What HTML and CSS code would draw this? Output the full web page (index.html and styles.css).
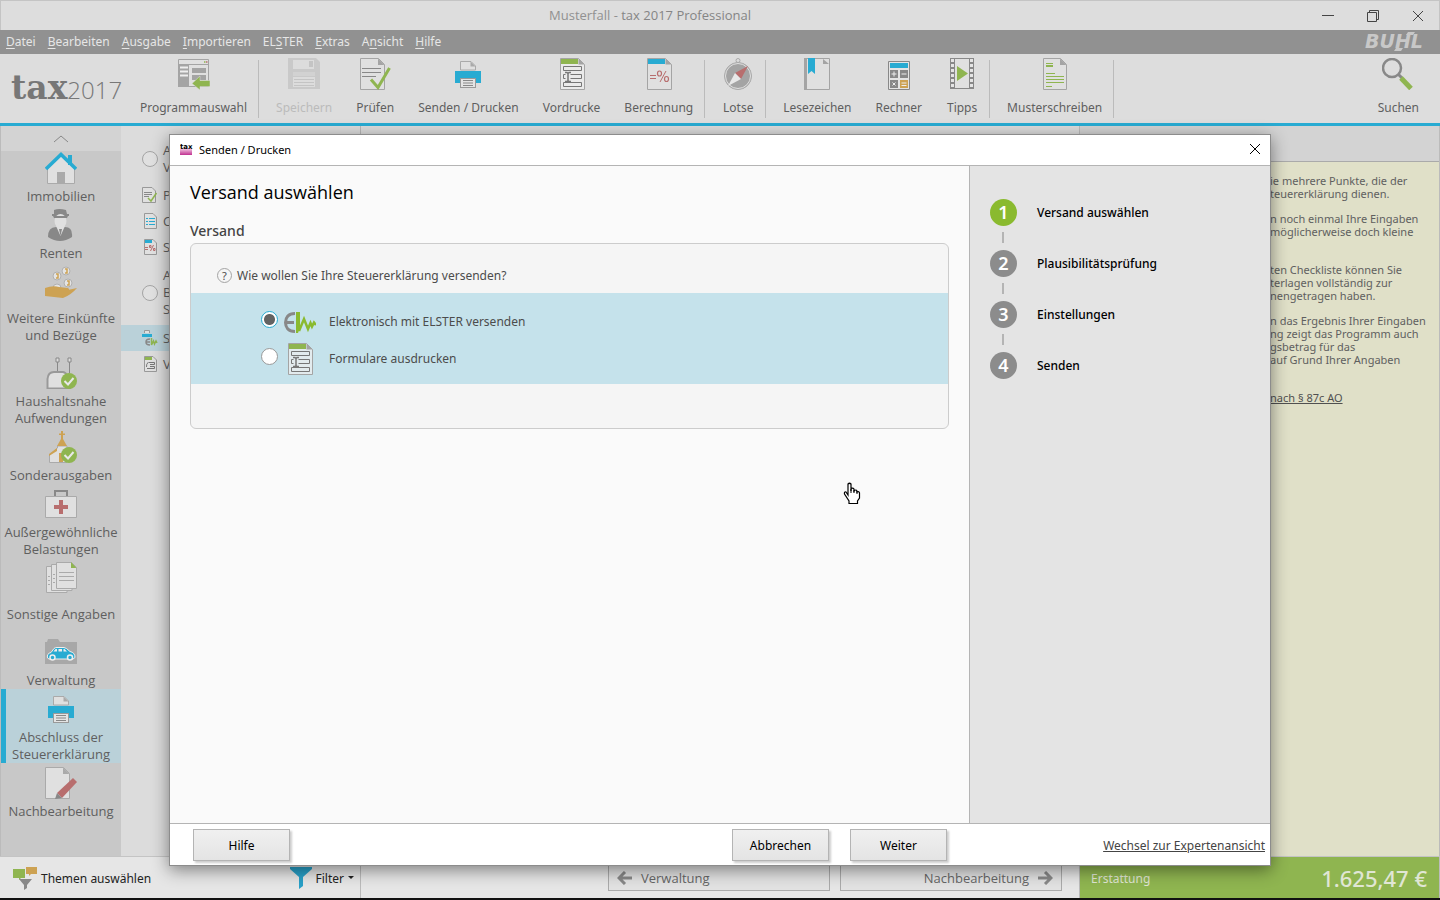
FILE: index.html
```html
<!DOCTYPE html>
<html lang="de">
<head>
    <meta charset="UTF-8">
    <meta name="viewport" content="width=device-width, initial-scale=1.0">
    <title>Musterfall - tax 2017 Professional</title>
    <link rel="stylesheet" href="styles.css">
</head>
<body>
<svg class="sprite" aria-hidden="true">
    <symbol id="i-printer" viewBox="0 0 32 32">
        <path d="M8.500 12V3.500H19L23.500 8V12Z" fill="#e0e0e0" stroke="#aaa"/>
        <path d="M18.500 3.500V8.500H23.500Z" fill="#aaa"/>
        <rect x="3" y="13" width="26" height="12" fill="#28abd2"/>
        <rect x="8.500" y="20.500" width="15" height="9" fill="#e4e4e4" stroke="#999"/>
        <path d="M11 22.500H21M11 25H21M11 27.500H21" stroke="#888"/>
    </symbol>
    <symbol id="i-form" viewBox="0 0 32 32">
        <path d="M4.500 .500H22.500L28.500 6.500V31.500H4.500Z" fill="#f0f0f0" fill-opacity=".7" stroke="#a4a4a4"/>
        <rect x="5" y="1" width="17" height="5" class="green"/>
        <path d="M22.500 .500V6.500H28.500Z" fill="#a4a4a4"/>
        <g fill="none" stroke="#777">
            <path d="M7.500 8.500H25.500V12.500H7.500ZM14.500 16.500H25.500V20.500H14.500M9.500 16.500H7.500V20.500H9.500M7.500 24.500H25.500V28.500H7.500Z"/>
            <path d="M12 15V23M9 14.500H11L12 15.500L13 14.500H15M9 23.500H11L12 22.500L13 23.500H15" stroke-width="1.500"/>
        </g>
    </symbol>
    <symbol id="i-calc-sheet" viewBox="0 0 32 32">
        <path d="M4.500 .500H22.500L28.500 6.500V31.500H4.500Z" fill="#e0e0e0" stroke="#a4a4a4"/>
        <rect x="5" y="1" width="17" height="5" fill="#28abd2"/>
        <path d="M22.500 .500V6.500H28.500Z" fill="#a4a4a4"/>
        <path d="M7 17.500H13M7 20.500H13M23 13L17 24" stroke="#b86e6e" fill="none"/>
        <g fill="none" stroke="#b86e6e" stroke-width="1.200"><ellipse cx="16.500" cy="15.500" rx="2" ry="2.500"/><ellipse cx="23.500" cy="21" rx="2" ry="2.500"/></g>
    </symbol>
    <symbol id="i-check-sheet" viewBox="0 0 32 32">
        <path d="M1.500 .500H19.500L25.500 6.500V31.500H1.500Z" fill="#e0e0e0" stroke="#a4a4a4"/>
        <path d="M19 .500V7H25.500Z" fill="#a4a4a4"/>
        <path d="M3 10.500H22M3 14.500H22M3 18.500H17" stroke="#888"/>
        <path d="M12 21.500L19 29.500L30.500 10" fill="none" stroke="#8fb550" stroke-width="3"/>
    </symbol>
    <symbol id="i-done" viewBox="0 0 16 16">
        <circle cx="8" cy="8" r="8" fill="#8fb550"/>
        <path d="M3.500 8L7 11.500L12.500 5" fill="none" stroke="#e8e8e8" stroke-width="2"/>
    </symbol>
</svg>

<div class="app">
    <header class="titlebar">
        <div class="title">Musterfall - <span>tax 2017 Professional</span></div>
        <div class="winbuttons">
            <button aria-label="Minimieren"><svg width="12" height="12"><path d="M0 5.500H12" stroke="#444"/></svg></button>
            <button aria-label="Wiederherstellen"><svg width="12" height="12"><path d="M.500 2.500H9.500V11.500H.500ZM2.500 2.500V.500H11.500V9.500H9.500" fill="none" stroke="#444"/></svg></button>
            <button aria-label="Schließen"><svg width="12" height="12"><path d="M1 1L11 11M11 1L1 11" stroke="#444"/></svg></button>
        </div>
    </header>

    <nav class="menubar">
        <a href="#"><u>D</u>atei</a>
        <a href="#"><u>B</u>earbeiten</a>
        <a href="#"><u>A</u>usgabe</a>
        <a href="#"><u>I</u>mportieren</a>
        <a href="#">EL<u>S</u>TER</a>
        <a href="#"><u>E</u>xtras</a>
        <a href="#">A<u>n</u>sicht</a>
        <a href="#"><u>H</u>ilfe</a>
        <svg class="buhl" width="74" height="23" viewBox="0 0 74 23">
            <text x="1" y="18">BUHL</text>
            <path d="M44 2H51L49 5H42ZM32 18H39L37 21H30Z" fill="#c8c8c8"/>
        </svg>
    </nav>

    <div class="toolbar">
        <div class="logo"><b>tax</b><span>2017</span></div>
        <div class="group">
            <button class="tool">
                <svg viewBox="0 0 32 32"><path d="M.500 1.500H30.500V28.500H.500Z" fill="#e0e0e0" stroke="#a4a4a4"/><path d="M0 6H11V29H0ZM11 6H31V7H11ZM14 10H28V15H14ZM14 17H28V22H14ZM30 7H31V24H30Z" fill="#a4a4a4"/><path d="M2 9.500H10M2 13.500H10M2 17.500H10" stroke="#eee" stroke-width="2"/><path d="M26 4H27.500" stroke="#8fb550" stroke-width="1.500"/><path d="M28 4H29.500" stroke="#b86e6e" stroke-width="1.500"/><path d="M14 25.500L22 18V22.500H32V28.500H22V32Z" fill="#8fb550" stroke="#ddd" stroke-width=".5"/></svg>
                Programmauswahl
            </button>
        </div>
        <div class="group">
            <button class="tool" disabled>
                <svg viewBox="0 0 32 32"><path d="M0 0H28L32 4V31H0Z" fill="#c9c9c9"/><path d="M5 2H26V11H5ZM5 19H27V29H5Z" fill="#dcdcdc"/><path d="M21 3H25V9H21ZM6 21H26V22H6ZM6 24H26V25H6ZM6 27H26V28H6Z" fill="#c4c4c4"/><path d="M5 14H27V18H5Z" fill="#d2d2d2"/></svg>
                Speichern
            </button>
            <button class="tool"><svg><use href="#i-check-sheet"/></svg>Prüfen</button>
            <button class="tool"><svg><use href="#i-printer"/></svg>Senden / Drucken</button>
            <button class="tool"><svg><use href="#i-form"/></svg>Vordrucke</button>
            <button class="tool"><svg><use href="#i-calc-sheet"/></svg>Berechnung</button>
        </div>
        <div class="group">
            <button class="tool">
                <svg viewBox="0 0 32 32"><circle cx="16" cy="2.500" r="2" fill="none" stroke="#aaa"/><circle cx="16" cy="18" r="13.500" fill="#a4a4a4" stroke="#aaa"/><circle cx="16" cy="18" r="12.500" fill="#a4a4a4" stroke="#e0e0e0"/><path d="M26 8L19 21L13 15Z" fill="#b86e6e"/><path d="M6 28L13 15L19 21Z" fill="#e8e8e8"/></svg>
                Lotse
            </button>
        </div>
        <div class="group">
            <button class="tool">
                <svg viewBox="0 0 32 32"><path d="M3.500 .500H28.500V31.500H3.500Z" fill="#e0e0e0" stroke="#a4a4a4"/><path d="M3 0H6V32H3Z" fill="#a4a4a4"/><path d="M22 1V6H28Z" fill="#a4a4a4"/><path d="M7 0H14V16L10.500 13L7 16Z" fill="#28abd2"/></svg>
                Lesezeichen
            </button>
            <button class="tool">
                <svg viewBox="0 0 32 32"><path d="M5.500 3.500H26.500V31.500H5.500Z" fill="#e4e4e4" stroke="#888"/><path d="M7 5H25V10H7Z" fill="#28abd2"/><path d="M7 12H15V20H7ZM17 12H25V20H17ZM7 22H15V30H7Z" fill="#888"/><path d="M17 22H25V30H17Z" fill="#cda253"/><path d="M8.500 16H13.500M11 13.500V18.500M18.500 16H23.500M9.500 24.500L12.500 27.500M12.500 24.500L9.500 27.500M18.500 25H23.500M18.500 27.500H23.500" stroke="#eee"/></svg>
                Rechner
            </button>
            <button class="tool">
                <svg viewBox="0 0 32 32"><path d="M4 0H28V31H4Z" fill="#888"/><path d="M9 1H23V30H9Z" fill="#e0e0e0"/><path d="M6.500 1V31M25.500 1V31" stroke="#e4e4e4" stroke-width="3" stroke-dasharray="3 2"/><path d="M11 8L22 15.500L11 23Z" fill="#8fb550"/></svg>
                Tipps
            </button>
        </div>
        <div class="group">
            <button class="tool">
                <svg viewBox="0 0 32 32"><path d="M4.500 .500H21.500L27.500 6.500V31.500H4.500Z" fill="#e0e0e0" stroke="#a4a4a4"/><path d="M21 .500V7H27.500Z" fill="#a4a4a4"/><path d="M7 5.500H14M7 7.500H14M7 8.500H14M7 15.500H16M7 18.500H25M7 21.500H25M7 24.500H25M7 28.500H13" stroke="#8fb550"/></svg>
                Musterschreiben
            </button>
        </div>
        <button class="tool search">
            <svg viewBox="0 0 32 32"><circle cx="10" cy="10" r="9" fill="none" stroke="#888" stroke-width="2.500"/><path d="M16 16L20 20" stroke="#888" stroke-width="3"/><path d="M19 20L29 30.500" stroke="#8fb550" stroke-width="5"/></svg>
            Suchen
        </button>
    </div>

    <main>
        <nav class="sidebar">
            <button class="up" aria-label="Nach oben"><svg width="16" height="8"><path d="M1 7L8 1L15 7" fill="none" stroke="#888"/></svg></button>
            <a href="#" class="topic first">
                <svg viewBox="0 0 32 32"><path d="M2.500 16L16 4L29.500 16V31.500H2.500Z" fill="#e0e0e0" stroke="#aaa"/><path d="M12 20H20V31H12Z" fill="#aaa"/><path d="M23 3H27V13H23Z" fill="#28abd2"/><path d="M1 17L16 2.500L31 17" fill="none" stroke="#28abd2" stroke-width="3.500"/></svg>
                Immobilien
            </a>
            <a href="#" class="topic">
                <svg viewBox="0 0 32 32"><path d="M9 1Q14 -1 21 1L22 5H24V7H7V5H9Z" fill="#888"/><ellipse cx="15.500" cy="12" rx="6" ry="7" fill="#e0e0e0"/><path d="M8 7H23L22 9H9Z" fill="#888"/><path d="M3 28Q3 18 11 18H20Q28 18 27 28Q15 36 3 28Z" fill="#888"/><path d="M11 17L15.500 27L20 17Z" fill="#e0e0e0"/><path d="M14 20H17L15.500 27Z" fill="#888"/></svg>
                Renten
            </a>
            <a href="#" class="topic low">
                <svg viewBox="0 0 32 32"><g fill="#e4e4e4" stroke="#b0b0b0"><circle cx="21" cy="5" r="4"/><circle cx="12" cy="10" r="4"/><circle cx="23" cy="17" r="4"/><circle cx="12" cy="22" r="4"/></g><path d="M20 3H22V7H20M11 8H13V12H11M22 15H24V19H22" fill="none" stroke="#cda253" stroke-width="1.500"/><path d="M0 22Q8 19 14 21L23 22Q26 24 21 25H18L32 22Q26 29 18 32L0 30Z" fill="#cda253"/></svg>
                Weitere Einkünfte<br>und Bezüge
            </a>
            <a href="#" class="topic high">
                <svg viewBox="0 0 32 32"><path d="M12.500 5V16M24.500 5V16" stroke="#888"/><path d="M11 1H14V5H11ZM23 1H26V5H23Z" fill="#ddd" stroke="#888"/><path d="M2.500 31.500V22Q3 15 9 15H18Q24 16 25 31.500Z" fill="#e0e0e0" stroke="#999" stroke-width="2"/><use href="#i-done" x="16" y="16" width="16" height="16"/></svg>
                Haushaltsnahe<br>Aufwendungen
            </a>
            <a href="#" class="topic">
                <svg viewBox="0 0 32 32"><path d="M4.500 31.500V24L12.500 17V15H22V31.500Z" fill="#e0e0e0" stroke="#aaa"/><path d="M4 25V23L12 17V20ZM12 15L16 8V4H14V2.500H16V0H18V2.500H20V4H18V8L22 15ZM14 22H18V31H14Z" fill="#cda253"/><use href="#i-done" x="16" y="16" width="16" height="16"/></svg>
                Sonderausgaben
            </a>
            <a href="#" class="topic">
                <svg viewBox="0 0 32 32"><path d="M10 8V3H22V8" fill="none" stroke="#888" stroke-width="2"/><path d="M.500 8.500H31.500V29.500H.500Z" fill="#e0e0e0" stroke="#aaa"/><path d="M14 12H18V17H23V21H18V26H14V21H9V17H14Z" fill="#b86e6e"/></svg>
                Außergewöhnliche<br>Belastungen
            </a>
            <a href="#" class="topic low">
                <svg viewBox="0 0 32 32"><g fill="#e0e0e0" stroke="#aaa"><path d="M1.500 4.500H22V30.500H1.500Z"/><path d="M6.500 2.500H27V28.500H6.500Z"/><path d="M11.500 .500H26.500L31.500 5.500V26.500H11.500Z"/><path d="M14 10.500H29M14 14.500H29M14 18.500H29M3 14.500H5M3 18.500H5M3 22.500H5M8 12.500H10M8 16.500H10M8 20.500H10"/></g><path d="M26 0V6H31.500Z" fill="#8fb550"/></svg>
                Sonstige Angaben
            </a>
            <a href="#" class="topic high">
                <svg viewBox="0 0 32 32"><path d="M0 6H2L3 3H13L15 6H32V28H0Z" fill="#a8a8a8"/><path d="M2.500 22Q1.500 17.500 6 16.500L9 12.500Q10 11.500 12 11.500H19Q21 11.500 25 15.500Q30 16.500 30 21.500L28 23H4Z" fill="#28abd2" stroke="#eee"/><path d="M8.500 15.500L10.500 13H12V15.500ZM13.500 13H17V15.500H13.500ZM18.500 13H19.500L22 15.500H18.500Z" fill="#eee"/><g fill="#28abd2" stroke="#eee" stroke-width="1.500"><circle cx="7.500" cy="21.500" r="2.500"/><circle cx="25" cy="21.500" r="2.500"/></g></svg>
                Verwaltung
            </a>
            <a href="#" class="topic active">
                <svg><use href="#i-printer"/></svg>
                Abschluss der<br>Steuererklärung
            </a>
            <a href="#" class="topic">
                <svg viewBox="0 0 32 32"><path d="M.500 .500H18.500L24.500 6.500V31.500H.500Z" fill="#e0e0e0" stroke="#aaa"/><path d="M18 .500V7H24.500Z" fill="#aaa"/><path d="M12 26L28 11L32 15L17 31Z" fill="#b86e6e"/><path d="M12 26L17 31L10 32Z" fill="#888"/></svg>
                Nachbearbeitung
            </a>
        </nav>

        <ul class="steps-list">
            <li class="two"><i class="ring"></i><span>A<br>V</span></li>
            <li><svg viewBox="0 0 16 16"><path d="M.500 .500H10L13.500 4V15.500H.500Z" fill="#e0e0e0" stroke="#999"/><path d="M2 5.500H10M2 7.500H10M2 9.500H7" stroke="#888"/><path d="M6 11L9 14L14.500 6" fill="none" stroke="#8fb550" stroke-width="1.500"/></svg><span>P</span></li>
            <li><svg viewBox="0 0 16 16"><path d="M2.500 .500H11L14.500 4V15.500H2.500Z" fill="#e0e0e0" stroke="#999"/><path d="M4 5.500H6M4 8.500H6M4 11.500H6M7 5.500H13M7 8.500H13M7 11.500H13" stroke="#28abd2"/></svg><span>C</span></li>
            <li><svg viewBox="0 0 16 16"><path d="M2.500 .500H11L14.500 4V15.500H2.500Z" fill="#e0e0e0" stroke="#999"/><path d="M3 1H10V4H3Z" fill="#28abd2"/><path d="M3 8.500H6M3 10.500H6M11.500 6L8.500 12" stroke="#b86e6e"/><path d="M7.500 6.500H9V8.500H7.500ZM11.500 9.500H13V11.500H11.500Z" fill="none" stroke="#b86e6e"/></svg><span>S</span></li>
            <li class="three"><i class="ring"></i><span>A<br>B<br>S</span></li>
            <li class="active"><svg viewBox="0 0 16 16"><path d="M2.500 3V.500H7.500V3" fill="#e0e0e0" stroke="#999"/><path d="M0 4H10V7H0Z" fill="#28abd2"/><path d="M8 9Q4 9 4 12T8 15M4 12H8" fill="none" stroke="#888" stroke-width="1.500"/><path d="M9.500 8V15L11.500 11L12.500 14L14 11L15 13" fill="none" stroke="#8fb550" stroke-width="1.500"/></svg><span>S</span></li>
            <li><svg viewBox="0 0 16 16"><path d="M2.500 .500H11L14.500 4V15.500H2.500Z" fill="#e0e0e0" stroke="#999"/><path d="M3 1H10V4H3Z" fill="#8fb550"/><path d="M7 6.500H12.500V8.500H8M8 10.500H12.500V12.500H5M6.500 6Q4 8 4.500 11" fill="none" stroke="#777"/></svg><span>V</span></li>
        </ul>

        <section class="work"></section>

        <aside class="help">
            <div class="help-head"></div>
            <div class="help-text">
                <p>ie mehrere Punkte, die der<br>teuererklärung dienen.</p>
                <p>n noch einmal Ihre Eingaben<br>möglicherweise doch kleine<br>&nbsp;</p>
                <p>ten Checkliste können Sie<br>terlagen vollständig zur<br>nengetragen haben.</p>
                <p>n das Ergebnis Ihrer Eingaben<br>ng zeigt das Programm auch<br>gsbetrag für das<br>auf Grund Ihrer Angaben<br>&nbsp;</p>
                <p><a href="#">nach § 87c AO</a></p>
            </div>
        </aside>
    </main>

    <footer class="bottombar">
        <div class="filters">
            <button>
                <svg width="24" height="24" viewBox="0 0 24 24"><path d="M0 2H12V11H8L6 13V11H0Z" fill="#8fb550"/><path d="M13 0H24V7H18L16 9V7H13Z" fill="#cda253"/><path d="M6 12H19L14 18V21L11 23V18Z" fill="#888"/></svg>
                Themen auswählen
            </button>
            <button>
                <svg width="22" height="24" viewBox="0 0 22 24"><path d="M0 0H22V2L13 10V19L9 22V10L0 2Z" fill="#28a0c8"/></svg>
                Filter <svg width="6" height="9"><path d="M0 2H6L3 5Z" fill="#222"/></svg>
            </button>
        </div>
        <div class="pager">
            <button><svg width="16" height="14"><path d="M8 1L2 7L8 13M2 7H15" fill="none" stroke="#888" stroke-width="3"/></svg>Verwaltung</button>
            <button class="next">Nachbearbeitung<svg width="16" height="14"><path d="M8 1L14 7L8 13M14 7H1" fill="none" stroke="#888" stroke-width="3"/></svg></button>
        </div>
        <div class="refund"><span>Erstattung</span><strong>1.625,47 €</strong></div>
    </footer>
</div>

<div class="dialog" role="dialog" aria-labelledby="dialog-title">
    <div class="dialog-title">
        <svg width="13" height="13" viewBox="0 0 13 13"><defs><linearGradient id="pink" x2="0" y2="1"><stop offset="0" stop-color="#f8d8ec"/><stop offset="1" stop-color="#c03090"/></linearGradient></defs><rect y="5" width="12" height="7" fill="url(#pink)"/><text x="0" y="6">tax</text></svg>
        <span id="dialog-title">Senden / Drucken</span>
        <button aria-label="Schließen"><svg width="12" height="12"><path d="M1 1L11 11M11 1L1 11" stroke="#000"/></svg></button>
    </div>
    <div class="dialog-body">
        <form class="content">
            <h1>Versand auswählen</h1>
            <h2>Versand</h2>
            <div class="box">
                <div class="question"><i>?</i>Wie wollen Sie Ihre Steuererklärung versenden?</div>
                <div class="options">
                    <label>
                        <input type="radio" name="versand" checked>
                        <svg width="32" height="32" viewBox="0 0 32 32"><path d="M11 7.500C4 7.500 1.500 12 1.500 16.500S4 25.500 11 25.500M2 16.500H10" fill="none" stroke="#888" stroke-width="3"/><path d="M15 25L20 13L24 23L26.500 17L28 20.500L30 16.500L32 19" fill="none" stroke="#8aba2f" stroke-width="2.500"/><path d="M12 6H16V22L14 27H12Z" fill="#8aba2f"/></svg>
                        Elektronisch mit ELSTER versenden
                    </label>
                    <label>
                        <input type="radio" name="versand">
                        <svg class="bright" width="32" height="32"><use href="#i-form"/></svg>
                        Formulare ausdrucken
                    </label>
                </div>
            </div>
        </form>
        <ol class="wizard">
            <li class="current"><b>1</b>Versand auswählen</li>
            <li><b>2</b>Plausibilitätsprüfung</li>
            <li><b>3</b>Einstellungen</li>
            <li><b>4</b>Senden</li>
        </ol>
    </div>
    <div class="dialog-foot">
        <div class="actions">
            <button>Hilfe</button>
            <button class="cancel">Abbrechen</button>
            <button>Weiter</button>
        </div>
        <a href="#">Wechsel zur Expertenansicht</a>
    </div>
</div>

<svg class="cursor" width="18" height="24" viewBox="0 0 18 24"><path d="M5 13V2Q6.500 .500 8 2V9L8 6.500Q10 5.500 11 7V9Q13 7 14 9V10Q16 9 16.500 11V16L14.500 19V21.500H6V19L1.500 12Q1 9.500 3 10Z" fill="#fff" stroke="#000" stroke-width="1.200"/><path d="M8 7V11M11 8V11M14 9V12" stroke="#000"/></svg>
</body>
</html>
```
FILE: styles.css
```css
* {
    box-sizing: border-box;
}
body {
    margin: 0;
    font: 13px/17px "Open Sans", "Noto Sans", sans-serif;
    color: #5f5f5f;
    background: #111;
}
button {
    font: inherit;
    color: inherit;
    background: none;
    border: 0;
    padding: 0;
}
a {
    color: inherit;
    text-decoration: none;
}
svg {
    flex: none;
}
.sprite {
    position: absolute;
    width: 0;
    height: 0;
}
.green {
    fill: #8fb550;
}
.bright .green {
    fill: #8aba2f;
}

.app {
    height: 100vh;
    display: flex;
    flex-direction: column;
    background: #ddd;
    border-bottom: 2px solid #111;
}

/* title and menu */
.titlebar {
    height: 30px;
    display: grid;
    grid-template-columns: 1fr auto 1fr;
    align-items: center;
    border: 1px solid #c4c4c4;
    border-bottom: 0;
    color: #919191;
}
.title {
    grid-column: 2;
    padding-right: 140px;
}
.title span {
    color: #858585;
}
.winbuttons {
    justify-self: end;
    display: flex;
    gap: 33px;
    padding-right: 15px;
}
.winbuttons svg {
    display: block;
}
.menubar {
    height: 24px;
    display: flex;
    align-items: center;
    gap: 12px;
    padding: 0 2px 1px 6px;
    background: #919191;
    color: #e6e6e6;
    font-family: "Noto Sans", sans-serif;
    font-size: 12px;
}
.menubar u {
    text-underline-offset: 2px;
}
.buhl {
    margin-left: auto;
}
.buhl text {
    font: italic bold 19px "DejaVu Sans", sans-serif;
    fill: #c8c8c8;
}

/* toolbar */
.toolbar {
    display: flex;
    height: 72px;
    padding-top: 4px;
    border-bottom: 3px solid #28abd2;
    font-family: "Noto Sans", sans-serif;
    font-size: 12px;
}
.logo {
    width: 123px;
    padding: 14px 0 0 11px;
    display: flex;
    align-items: baseline;
    color: #777;
    line-height: 32px;
}
.logo b {
    font-family: "DejaVu Serif", serif;
    font-size: 33px;
}
.logo span {
    font-family: "Open Sans", sans-serif;
    font-size: 24px;
    font-weight: 300;
}
.group {
    display: flex;
    gap: 24px;
    height: 60px;
    padding: 0 12px 0 17px;
    background: linear-gradient(#bbb, #bbb) right bottom / 1px 58px no-repeat;
}
.tool {
    display: flex;
    flex-direction: column;
    align-items: center;
    white-space: nowrap;
}
.tool svg {
    width: 32px;
    height: 32px;
    margin-bottom: 9px;
}
.tool:disabled {
    color: #bbb;
}
.search {
    margin: 0 21px 0 auto;
}

/* main area */
main {
    flex: 1;
    min-height: 0;
    display: flex;
}
.sidebar {
    width: 121px;
    background: #c8c8c8;
    border-left: 1px solid #bbb;
    text-align: center;
}
.up {
    display: block;
    width: 100%;
    height: 25px;
    background: #d3d3d3;
}
.topic {
    display: block;
    padding-top: 4px;
}
.topic svg {
    display: block;
    width: 32px;
    height: 32px;
    margin: 0 auto 4px;
}
.topic.first {
    padding-top: 1px;
}
.topic.low svg {
    margin-bottom: 12px;
}
.topic.high {
    padding-top: 13px;
}
.topic.active {
    background: linear-gradient(#28abd2, #28abd2) left / 5px 100% no-repeat #bad1d9;
}
.steps-list {
    width: 240px;
    margin: 0;
    padding: 10px 0 0;
    list-style: none;
    background: #dcdcdc;
    border-right: 1px solid #b8b8b8;
}
.steps-list li {
    height: 26px;
    display: flex;
    align-items: center;
    gap: 5px;
    padding-left: 21px;
}
.steps-list svg,
.ring {
    width: 16px;
    height: 16px;
}
.ring {
    border: 1px solid #a4a4a4;
    border-radius: 50%;
    background: #e0e0e0;
}
.steps-list .two {
    height: 46px;
}
.steps-list .three {
    height: 65px;
}
.steps-list .active {
    background: #bad1d9;
}
.work {
    flex: 1;
    background: #dcdcdc;
}
.help {
    width: 361px;
    display: flex;
    flex-direction: column;
    border: solid #bbb;
    border-width: 0 1px;
    background: #e0e0c8;
}
.help-head {
    height: 36px;
    background: #d3d3d3;
    border-bottom: 1px solid #aaa;
}
.help-text {
    padding: 12px 0 0 190px;
    font-family: "Noto Sans", sans-serif;
    font-size: 11px;
    line-height: 13px;
    white-space: nowrap;
}
.help-text p {
    margin: 0 0 12px;
}
.help-text a {
    text-decoration: underline;
    color: #505050;
}

/* bottom bar */
.bottombar {
    height: 42px;
    display: flex;
    background: #e6e6e6;
    border-top: 1px solid #c4c4c4;
}
.filters {
    width: 361px;
    padding: 2px 6px 0 13px;
    display: flex;
    justify-content: space-between;
    border-right: 1px solid #bbb;
    color: #222;
    font-family: "Noto Sans", sans-serif;
    font-size: 12px;
}
.filters button {
    display: flex;
    align-items: center;
    gap: 4px;
}
.pager {
    flex: 1;
    display: flex;
    justify-content: flex-end;
    align-items: flex-end;
    gap: 10px;
    padding: 0 17px 7px 0;
}
.pager button {
    width: 222px;
    height: 26px;
    display: flex;
    align-items: center;
    gap: 8px;
    padding: 0 8px;
    border: 1px solid #aaa;
    background: #e2e2e2;
    color: #666;
}
.pager .next {
    justify-content: flex-end;
}
.refund {
    width: 361px;
    padding: 2px 12px 0 11px;
    display: flex;
    align-items: center;
    justify-content: space-between;
    border: solid #bbb;
    border-width: 0 1px;
    background: #8fb550;
    color: #e0e6d4;
    font-family: "Noto Sans", sans-serif;
    font-size: 12px;
}
.refund strong {
    font-size: 22px;
    font-weight: 500;
}

/* dialog */
.dialog {
    position: absolute;
    inset: 134px 169px 34px;
    display: flex;
    flex-direction: column;
    background: #fff;
    border: 1px solid #8c8c8c;
    box-shadow: 0 4px 16px rgba(0, 0, 0, .45);
    color: #000;
    font-family: "Noto Sans", sans-serif;
    font-size: 12px;
}
.dialog-title {
    height: 31px;
    display: flex;
    align-items: center;
    gap: 6px;
    padding: 0 9px 2px 10px;
    border-bottom: 1px solid #b4b4b4;
    font-size: 11px;
}
.dialog-title text {
    font: bold 7px "DejaVu Sans", sans-serif;
}
.dialog-title button {
    margin-left: auto;
}
.dialog-title button svg {
    display: block;
}
.dialog-body {
    flex: 1;
    display: flex;
}
.content {
    flex: 1;
    padding: 13px 20px;
    background: #fafafa;
}
h1 {
    margin: 0;
    font: 400 18px/26px "Open Sans", sans-serif;
}
h2 {
    margin: 16px 0 2px;
    font-size: 14px;
    line-height: 20px;
    font-weight: 500;
    color: #444;
}
.box {
    padding: 23px 0 44px;
    border: 1px solid #ccc;
    border-radius: 6px;
    background: #f5f5f5;
    color: #4c4c4c;
}
.question {
    display: flex;
    align-items: center;
    gap: 5px;
    height: 16px;
    margin: 0 0 10px 26px;
}
.question i {
    width: 15px;
    height: 15px;
    border: 1px solid #a4a4a4;
    border-radius: 50%;
    font: 11px/13px "Noto Sans", sans-serif;
    text-align: center;
}
.options {
    padding: 12px 0 9px 70px;
    display: flex;
    flex-direction: column;
    gap: 4px;
    background: #c5e2eb;
}
.options label {
    display: flex;
    align-items: center;
    height: 33px;
}
.options input {
    appearance: none;
    width: 17px;
    height: 17px;
    margin: 0 6px 4px 0;
    border: 1px solid #999;
    border-radius: 50%;
    background: #fff;
}
.options input:checked {
    border-color: #28abd2;
    background: radial-gradient(circle, #636363 5px, #fff 6px);
}
.options svg {
    margin-right: 13px;
}
.wizard {
    width: 301px;
    margin: 0;
    padding: 33px 20px;
    border-left: 1px solid #b4b4b4;
    background: #e4e4e4;
    list-style: none;
    font-weight: 500;
}
.wizard li {
    display: flex;
    align-items: center;
    gap: 20px;
    height: 27px;
    margin-bottom: 24px;
    position: relative;
}
.wizard li + li::before {
    content: "";
    position: absolute;
    left: 12px;
    top: -18px;
    width: 2px;
    height: 11px;
    background: #b4b4b4;
}
.wizard b {
    width: 27px;
    border-radius: 50%;
    background: #8c8c8c;
    color: #fff;
    font-size: 18px;
    font-weight: 600;
    line-height: 27px;
    text-align: center;
}
.wizard .current b {
    background: #8aba2f;
}
.dialog-foot {
    height: 42px;
    display: flex;
    align-items: center;
    border-top: 1px solid #b4b4b4;
}
.actions {
    flex: 1;
    display: flex;
    gap: 21px;
    padding: 0 0 0 23px;
}
.actions button {
    width: 97px;
    height: 32px;
    padding-top: 1px;
    border: 1px solid #b4b4b4;
    background: linear-gradient(#f0f0f0, #e4e4e4);
    box-shadow: 2px 2px 2px rgba(0, 0, 0, .2);
}
.actions .cancel {
    margin-left: auto;
}
.dialog-foot a {
    width: 323px;
    padding: 1px 5px 0 0;
    text-align: right;
    text-decoration: underline;
    color: #444;
}
.cursor {
    position: absolute;
    left: 843px;
    top: 482px;
}
```
